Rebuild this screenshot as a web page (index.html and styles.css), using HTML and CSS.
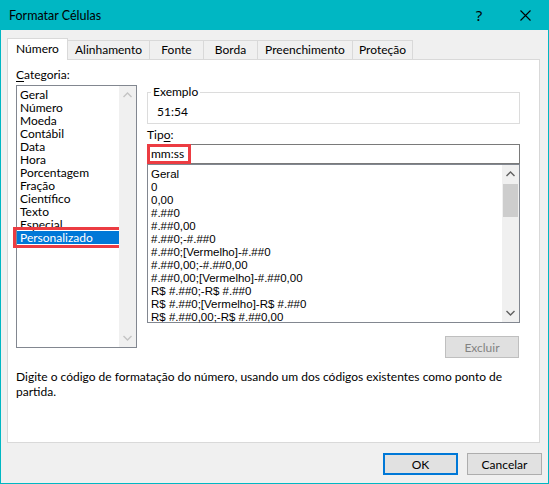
FILE: index.html
```html
<!DOCTYPE html>
<html lang="pt-BR">
<head>
<meta charset="utf-8">
<title>Formatar Células</title>
<link rel="stylesheet" href="styles.css">
</head>
<body>
<div class="window">
  <div class="titlebar">
    <span class="title">Formatar Células</span>
    <span class="capbtn help">?</span>
    <span class="capbtn close">
      <svg width="11" height="11" viewBox="0 0 11 11"><path d="M0.5 0.5L10.5 10.5M10.5 0.5L0.5 10.5" stroke="#000" stroke-width="1.1" fill="none"/></svg>
    </span>
  </div>
  <div class="client">
    <div class="tabs">
      <div class="tab active w-numero">Número</div>
      <div class="tab w-alin">Alinhamento</div>
      <div class="tab w-fonte">Fonte</div>
      <div class="tab w-borda">Borda</div>
      <div class="tab w-preen">Preenchimento</div>
      <div class="tab w-prot">Proteção</div>
    </div>
    <div class="panel">
      <div class="columns">
        <div class="leftcol">
          <div class="label"><u>C</u>ategoria:</div>
          <div class="listbox catlist">
            <ul class="items">
              <li>Geral</li>
              <li>Número</li>
              <li>Moeda</li>
              <li>Contábil</li>
              <li>Data</li>
              <li>Hora</li>
              <li>Porcentagem</li>
              <li>Fração</li>
              <li>Científico</li>
              <li>Texto</li>
              <li>Especial</li>
              <li class="selected">Personalizado</li>
            </ul>
            <div class="vscroll disabled">
              <svg class="arrow" width="9" height="6" viewBox="0 0 9 6"><path d="M0.5 5L4.5 1L8.5 5" stroke="#C4C4C4" stroke-width="1.4" fill="none"/></svg>
              <div class="track"></div>
              <svg class="arrow" width="9" height="6" viewBox="0 0 9 6"><path d="M0.5 1L4.5 5L8.5 1" stroke="#C4C4C4" stroke-width="1.4" fill="none"/></svg>
            </div>
          </div>
        </div>
        <div class="rightcol">
          <fieldset class="example">
            <legend>Exemplo</legend>
            <div class="sample">51:54</div>
          </fieldset>
          <div class="label tipo">Tip<u>o</u>:</div>
          <div class="typeinput"><span class="value">mm:ss</span><span class="mark"></span></div>
          <div class="listbox typelist">
            <ul class="items codes">
              <li>Geral</li>
              <li>0</li>
              <li>0,00</li>
              <li>#.##0</li>
              <li>#.##0,00</li>
              <li>#.##0;-#.##0</li>
              <li>#.##0;[Vermelho]-#.##0</li>
              <li>#.##0,00;-#.##0,00</li>
              <li>#.##0,00;[Vermelho]-#.##0,00</li>
              <li>R$ #.##0;-R$ #.##0</li>
              <li>R$ #.##0;[Vermelho]-R$ #.##0</li>
              <li>R$ #.##0,00;-R$ #.##0,00</li>
            </ul>
            <div class="vscroll">
              <svg class="arrow" width="9" height="6" viewBox="0 0 9 6"><path d="M0.5 5L4.5 1L8.5 5" stroke="#606060" stroke-width="1.4" fill="none"/></svg>
              <div class="track"><div class="thumb"></div></div>
              <svg class="arrow" width="9" height="6" viewBox="0 0 9 6"><path d="M0.5 1L4.5 5L8.5 1" stroke="#606060" stroke-width="1.4" fill="none"/></svg>
            </div>
          </div>
          <div class="btnrow"><button class="btn disabled">Excluir</button></div>
        </div>
      </div>
      <p class="desc">Digite o código de formatação do número, usando um dos códigos existentes como ponto de<br>partida.</p>
    </div>
    <div class="footer">
      <button class="btn default">OK</button>
      <button class="btn">Cancelar</button>
    </div>
  </div>
</div>
</body>
</html>
```
FILE: styles.css
```css
* { box-sizing: border-box; }
html, body { margin: 0; padding: 0; }
body {
  width: 549px;
  height: 484px;
  font-family: Lato, "Noto Sans", sans-serif;
  font-size: 12px;
  color: #000;
  background: #fff;
  overflow: hidden;
}
.window {
  width: 549px;
  height: 484px;
  display: flex;
  flex-direction: column;
  background: #00B7C3;
  padding: 0 1px 1px 1px;
}
.titlebar {
  height: 30px;
  flex: none;
  display: flex;
  align-items: center;
  padding-left: 8px;
}
.title { flex: 1; font-size: 12.5px; }
.capbtn {
  width: 46px;
  height: 30px;
  display: flex;
  align-items: center;
  justify-content: center;
}
.help { font-size: 15px; font-family: "Noto Sans", sans-serif; }
.close svg { display: block; }

.client {
  flex: 1;
  background: #F0F0F0;
  padding: 8px 6px 0 6px;
  display: flex;
  flex-direction: column;
}
.tabs {
  display: flex;
  align-items: flex-end;
  height: 21px;
}
.tab {
  height: 19px;
  line-height: 18px;
  text-align: center;
  background: #F0F0F0;
  border: 1px solid #D9D9D9;
  border-left: none;
  border-bottom: none;
}
.tab.active {
  height: 22px;
  line-height: 20px;
  margin-bottom: -1px;
  background: #fff;
  border-left: 1px solid #D9D9D9;
  position: relative;
  z-index: 1;
}
.w-numero { width: 61px; }
.w-alin { width: 82px; }
.w-fonte { width: 54px; }
.w-borda { width: 54px; }
.w-preen { width: 95px; }
.w-prot { width: 60px; }

.panel {
  width: 533px;
  height: 384px;
  flex: none;
  background: #fff;
  border: 1px solid #D9D9D9;
  padding: 7px 18px 0 8px;
  display: flex;
  flex-direction: column;
}
.columns { display: flex; gap: 10px; }
.leftcol { width: 121px; flex: none; }
.rightcol {
  width: 373px;
  flex: none;
  display: flex;
  flex-direction: column;
  padding-top: 18px;
}
.label { height: 18px; line-height: 16px; }
.label u { text-decoration-thickness: 1px; text-underline-offset: 2px; }

.listbox {
  border: 1px solid #828790;
  display: flex;
  background: #fff;
}
.catlist { height: 263px; }
.items {
  list-style: none;
  margin: 0;
  padding: 2px 0 0 0;
  flex: 1;
}
.items li {
  height: 13px;
  line-height: 13px;
  padding-left: 3px;
  white-space: nowrap;
}
.items li.selected {
  background: #0078D7;
  color: #fff;
  outline: 3px solid #EC3C42;
  outline-offset: 1px;
}
.vscroll {
  width: 17px;
  flex: none;
  background: #F0F0F0;
  display: flex;
  flex-direction: column;
  align-items: center;
}
.vscroll .arrow { flex: none; margin: 6px 0; }
.vscroll .track { flex: 1; width: 100%; padding-top: 1px; }
.thumb { width: 15px; height: 33px; margin: 0 auto; background: #CDCDCD; }

.example {
  margin: 0;
  padding: 0 3px;
  height: 39px;
  border: 1px solid #DCDCDC;
  min-width: 0;
}
.example legend {
  padding: 0 2px;
  line-height: 14px;
}
.sample { padding-left: 6px; margin-top: 5px; line-height: 16px; }
.tipo { margin-top: 3px; height: 17px; }
.typeinput {
  height: 20px;
  border: 1px solid #7A7A7A;
  padding-left: 3px;
  line-height: 18px;
  position: relative;
}
.typeinput .mark {
  position: absolute;
  left: -1px;
  top: -1px;
  width: 44px;
  height: 20px;
  border: 3px solid #EC3C42;
}
.typelist { height: 159px; }
.codes {
  font-family: "Liberation Sans", Arial, sans-serif;
  font-size: 11.5px;
  padding-top: 3px;
}
.btnrow { display: flex; justify-content: flex-end; margin-top: 13px; padding-right: 1px; }

.btn {
  width: 75px;
  height: 22px;
  font-family: inherit;
  font-size: 12px;
  color: #000;
  background: #E1E1E1;
  border: 1px solid #ADADAD;
  padding: 0;
  margin: 0;
}
.btn.disabled {
  width: 74px;
  background: #E0E0E0;
  border-color: #BFBFBF;
  color: #838383;
}
.btn.default { border: 2px solid #0078D7; }

.desc {
  margin: 11px 0 0 0;
  line-height: 15px;
}
.footer {
  display: flex;
  justify-content: flex-end;
  gap: 9px;
  margin-top: 10px;
}
```
